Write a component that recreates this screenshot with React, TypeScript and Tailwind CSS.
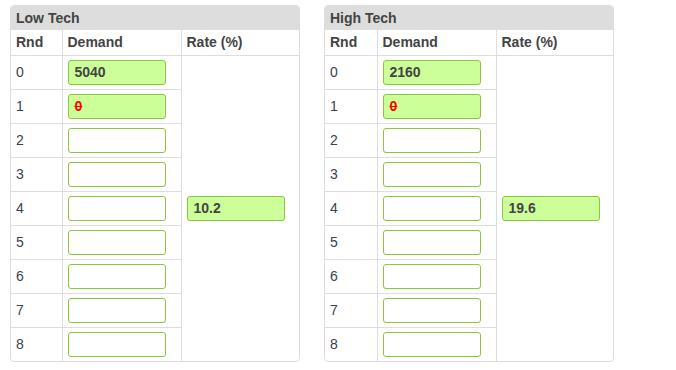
const rounds = [0, 1, 2, 3, 4, 5, 6, 7, 8];

const panels = [
  { title: "Low Tech", first: "5040", rate: "10.2", rndW: "w-[51px]" },
  { title: "High Tech", first: "2160", rate: "19.6", rndW: "w-[52px]" },
];

function Field({ value, red }: { value?: string; red?: boolean }) {
  const filled = value !== undefined;
  return (
    <div
      className={`flex h-[25px] w-[98px] items-center rounded-[3px] border border-[#8cc63e] px-[6px] text-[14px] font-bold ${
        filled ? "bg-[#ccff99]" : "bg-white"
      } ${red ? "text-[#ff0000] line-through" : "text-[#444]"}`}
    >
      {value}
    </div>
  );
}

function Panel({ title, first, rate, rndW }: { title: string; first: string; rate: string; rndW: string }) {
  return (
    <div className="w-[290px] overflow-hidden rounded-[4px] border border-[#ddd] bg-white">
      <div className="flex h-[24px] items-center bg-[#ddd] px-[5px] text-[14px] font-bold text-[#444]">{title}</div>
      <table className="w-full table-fixed border-collapse text-[14px] text-[#333]">
        <thead>
          <tr className="h-[25px]">
            <th className={`${rndW} border-r border-[#ddd] px-[5px] text-left font-bold text-[#444]`}>Rnd</th>
            <th className="w-[119px] border-r border-[#ddd] px-[5px] text-left font-bold text-[#444]">Demand</th>
            <th className="px-[5px] text-left font-bold text-[#444]">Rate (%)</th>
          </tr>
        </thead>
        <tbody>
          {rounds.map((r) => (
            <tr key={r} className="h-[34px] border-t border-[#ddd]">
              <td className="border-r border-[#ddd] px-[5px] text-[#3a4150]">{r}</td>
              <td className="border-r border-[#ddd] px-[5px]">
                {r === 0 ? <Field value={first} /> : r === 1 ? <Field value="0" red /> : <Field />}
              </td>
              {r === 0 && (
                <td rowSpan={9} className="px-[5px] align-middle">
                  <Field value={rate} />
                </td>
              )}
            </tr>
          ))}
        </tbody>
      </table>
    </div>
  );
}

export default function App() {
  return (
    <div className="flex min-h-[370px] w-[676px] items-start gap-[24px] bg-white pl-[10px] pt-[5px] font-['Liberation_Sans',Arial,sans-serif]">
      {panels.map((p) => (
        <Panel key={p.title} {...p} />
      ))}
    </div>
  );
}
